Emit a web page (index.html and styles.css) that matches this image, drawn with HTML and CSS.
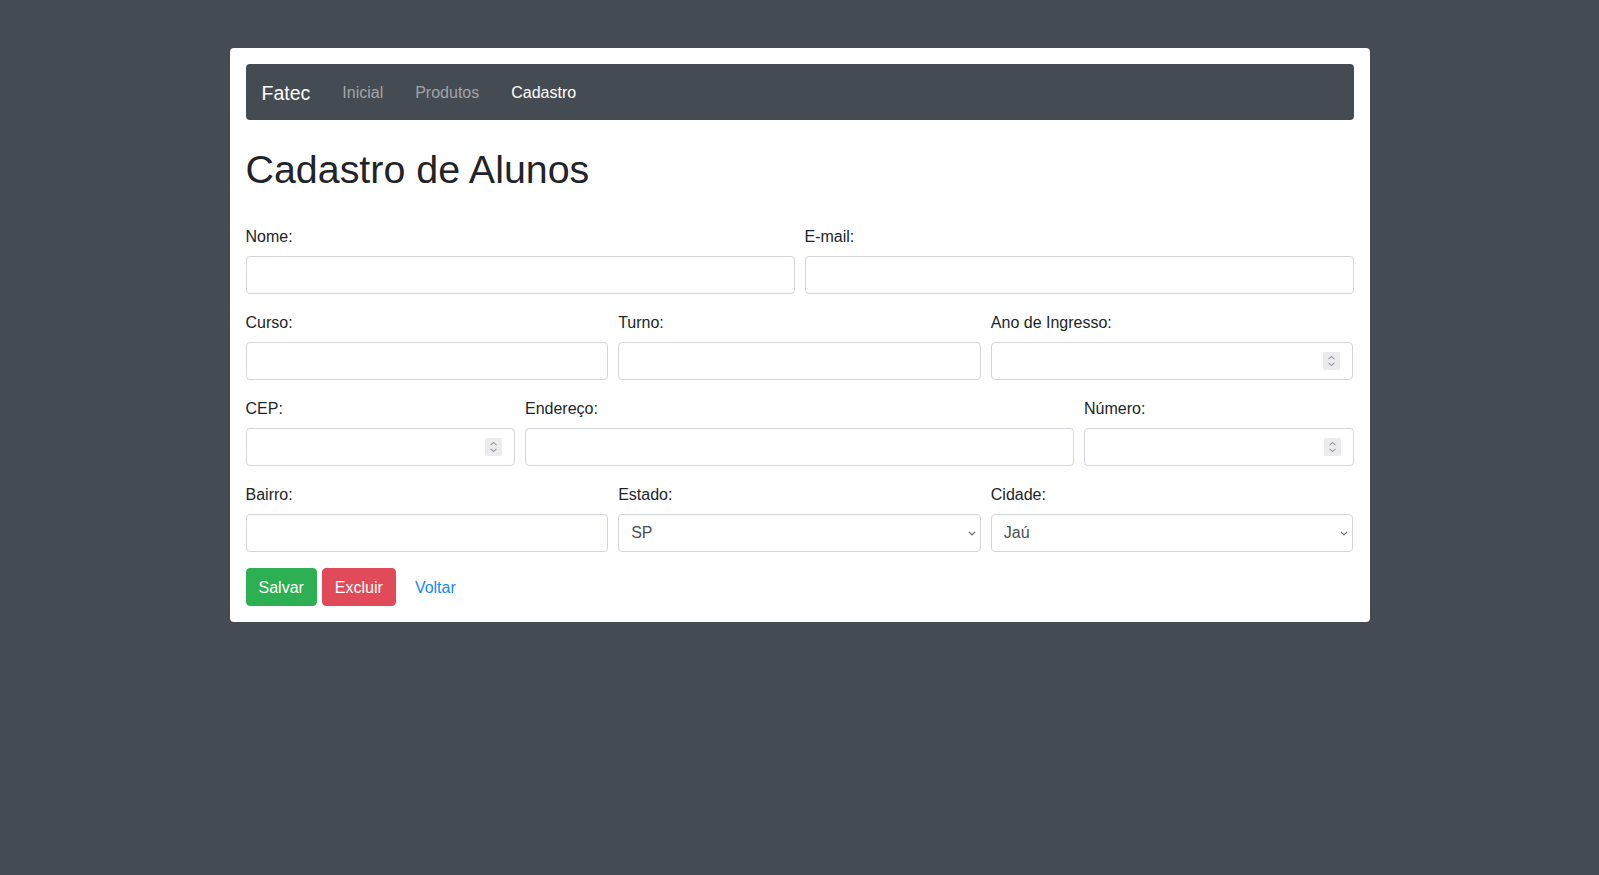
FILE: index.html
```html
<!DOCTYPE html>
<html lang="pt-BR">
<head>
<meta charset="utf-8">
<title>Cadastro de Alunos</title>
<link rel="stylesheet" href="styles.css">
</head>
<body>
<div class="container">
  <nav class="navbar">
    <a class="brand" href="#">Fatec</a>
    <a class="nav-link" href="#">Inicial</a>
    <a class="nav-link" href="#">Produtos</a>
    <a class="nav-link active" href="#">Cadastro</a>
  </nav>

  <h1 class="title">Cadastro de Alunos</h1>

  <form class="form">
    <div class="form-row">
      <div class="col col-6">
        <label class="label">Nome:</label>
        <input class="control" type="text">
      </div>
      <div class="col col-6">
        <label class="label">E-mail:</label>
        <input class="control" type="email">
      </div>
    </div>

    <div class="form-row">
      <div class="col col-4">
        <label class="label">Curso:</label>
        <input class="control" type="text">
      </div>
      <div class="col col-4">
        <label class="label">Turno:</label>
        <input class="control" type="text">
      </div>
      <div class="col col-4">
        <label class="label">Ano de Ingresso:</label>
        <div class="field">
          <input class="control" type="number">
          <span class="spin"><svg width="9" height="12" viewBox="0 0 9 12"><path d="M1.5 4.2 4.5 1.5 7.5 4.2M1.5 7.8 4.5 10.5 7.5 7.8" fill="none" stroke="#9a9ca2" stroke-width="1.1"/></svg></span>
        </div>
      </div>
    </div>

    <div class="form-row">
      <div class="col col-3">
        <label class="label">CEP:</label>
        <div class="field">
          <input class="control" type="number">
          <span class="spin"><svg width="9" height="12" viewBox="0 0 9 12"><path d="M1.5 4.2 4.5 1.5 7.5 4.2M1.5 7.8 4.5 10.5 7.5 7.8" fill="none" stroke="#9a9ca2" stroke-width="1.1"/></svg></span>
        </div>
      </div>
      <div class="col col-6">
        <label class="label">Endereço:</label>
        <input class="control" type="text">
      </div>
      <div class="col col-3">
        <label class="label">Número:</label>
        <div class="field">
          <input class="control" type="number">
          <span class="spin"><svg width="9" height="12" viewBox="0 0 9 12"><path d="M1.5 4.2 4.5 1.5 7.5 4.2M1.5 7.8 4.5 10.5 7.5 7.8" fill="none" stroke="#9a9ca2" stroke-width="1.1"/></svg></span>
        </div>
      </div>
    </div>

    <div class="form-row">
      <div class="col col-4">
        <label class="label">Bairro:</label>
        <input class="control" type="text">
      </div>
      <div class="col col-4">
        <label class="label">Estado:</label>
        <div class="field">
          <select class="control select"><option>SP</option></select>
          <svg class="caret" width="8" height="5" viewBox="0 0 8 5"><path d="M1 1 4 4 7 1" fill="none" stroke="#6b6e73" stroke-width="1.1"/></svg>
        </div>
      </div>
      <div class="col col-4">
        <label class="label">Cidade:</label>
        <div class="field">
          <select class="control select"><option>Jaú</option></select>
          <svg class="caret" width="8" height="5" viewBox="0 0 8 5"><path d="M1 1 4 4 7 1" fill="none" stroke="#6b6e73" stroke-width="1.1"/></svg>
        </div>
      </div>
    </div>

    <div class="actions">
      <button type="button" class="btn btn-success">Salvar</button>
      <button type="button" class="btn btn-danger">Excluir</button>
      <a class="btn btn-link" href="#">Voltar</a>
    </div>
  </form>
</div>
</body>
</html>
```

FILE: styles.css
```css
* { box-sizing: border-box; }

html, body {
  margin: 0;
  padding: 0;
}

body {
  background: #454b52;
  font-family: "Liberation Sans", Arial, sans-serif;
  font-size: 16px;
  line-height: 24px;
  color: #212529;
}

.container {
  width: 1140px;
  margin: 48px auto 0;
  background: #ffffff;
  border-radius: 4px;
  padding: 16px;
}

.navbar {
  display: flex;
  align-items: center;
  gap: 32px;
  height: 56px;
  padding: 0 16px;
  background: #454b52;
  border-radius: 4px;
}

.brand {
  color: #ffffff;
  font-size: 19.5px;
  line-height: 30px;
  text-decoration: none;
  margin-top: 2px;
}

.nav-link {
  color: rgba(255, 255, 255, 0.5);
  text-decoration: none;
  font-size: 16px;
  margin-top: 2px;
}

.nav-link.active {
  color: #ffffff;
}

.title {
  font-size: 39.4px;
  font-weight: 500;
  line-height: 47px;
  margin: 26px 0 31px;
  color: #212529;
}

.form-row {
  display: flex;
  margin: 0 -5px;
}

.col {
  padding: 0 5px;
  margin-bottom: 16px;
}

.col-6 { flex: 0 0 50%; }
.col-4 { flex: 0 0 33.3333%; }
.col-3 { flex: 0 0 25%; }

.label {
  display: block;
  padding-top: 1px;
  margin-bottom: 7px;
  line-height: 24px;
}

.field {
  position: relative;
}

.control {
  display: block;
  width: 100%;
  height: 38px;
  padding: 6px 12px;
  font-family: inherit;
  font-size: 16px;
  line-height: 24px;
  color: #495057;
  background: #ffffff;
  border: 1px solid #d3d6da;
  border-radius: 4px;
  outline: none;
}

.control[type="number"] {
  -moz-appearance: textfield;
  appearance: textfield;
}

.control[type="number"]::-webkit-inner-spin-button,
.control[type="number"]::-webkit-outer-spin-button {
  -webkit-appearance: none;
  margin: 0;
}

.spin {
  position: absolute;
  right: 13px;
  top: 10px;
  width: 17px;
  height: 18px;
  background: #ebebee;
  border-radius: 2px;
  display: flex;
  align-items: center;
  justify-content: center;
  pointer-events: none;
}

.select {
  -webkit-appearance: none;
  appearance: none;
  padding-right: 28px;
}

.caret {
  position: absolute;
  right: 5px;
  top: 17px;
  pointer-events: none;
}

.actions {
  display: flex;
  align-items: center;
  gap: 5px;
}

.btn {
  display: inline-block;
  height: 38px;
  padding: 7px 12px;
  font-family: inherit;
  font-size: 16px;
  line-height: 24px;
  border: 1px solid transparent;
  border-radius: 4px;
  color: #ffffff;
  cursor: pointer;
  text-decoration: none;
}

.btn-success {
  background: #2daf53;
  border-color: #2daf53;
}

.btn-danger {
  background: #e14b59;
  border-color: #e14b59;
}

.btn-link {
  color: #1688f5;
  background: transparent;
  margin-left: 1px;
}
```
